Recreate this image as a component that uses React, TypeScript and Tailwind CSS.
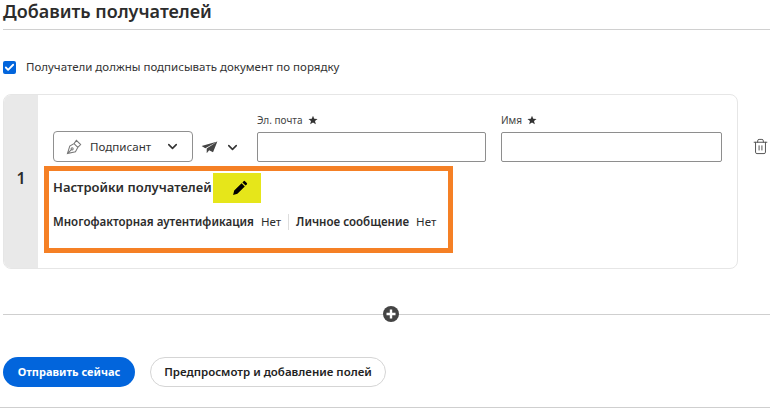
import { Check, ChevronDown, Trash2 } from "lucide-react";

const font = "font-['Noto_Sans','Liberation_Sans',sans-serif]";

function Star() {
  return (
    <svg viewBox="0 0 12 12" className="w-[10px] h-[10px] ml-[5px] text-[#333]" fill="currentColor">
      <path d="M6 .8l1.5 3.7 4 .3-3.1 2.5 1 3.9L6 9.1l-3.4 2.1 1-3.9L.5 4.8l4-.3z" />
    </svg>
  );
}

function Field({ label, width }: { label: string; width: string }) {
  return (
    <div className={`flex flex-col ${width}`}>
      <div className="flex items-center h-[14px] mb-[5px] text-[10px] text-[#444]">
        {label}
        <Star />
      </div>
      <div className="h-[30px] border border-[#8e8e8e] rounded-[2px] bg-white" />
    </div>
  );
}

export default function App() {
  return (
    <div className={`relative w-[777px] h-[415px] overflow-hidden bg-white ${font}`}>
      {/* Header */}
      <div className="ml-[3px] mr-[7px] h-[30px] pt-[1px] border-b border-[#d0d0d0]">
        <h1 className="text-[18px] leading-[20px] font-semibold text-[#2c2c2c]">Добавить получателей</h1>
      </div>

      {/* Order checkbox */}
      <div className="flex items-center ml-[3px] mt-[30px] h-[14px]">
        <div className="w-[13px] h-[13px] rounded-[2px] bg-[#0265dc] flex items-center justify-center">
          <Check className="w-[11px] h-[11px] text-white" strokeWidth={4} />
        </div>
        <span className="ml-[10px] text-[11.5px] text-[#333]">Получатели должны подписывать документ по порядку</span>
      </div>

      {/* Recipient card */}
      <div className="flex ml-[3px] mt-[20px]">
        <div className="relative flex w-[735px] h-[175px] rounded-[8px] border border-[#e6e6e6] overflow-hidden">
          <div className="w-[34px] bg-[#e9e9e9] flex items-center justify-center pb-[8px] text-[16px] font-semibold text-[#2c2c2c]">
            1
          </div>
          <div className="flex-1 pl-[15px] pt-[18px]">
            <div className="flex items-end">
              <button className="flex items-center w-[140px] h-[31px] pl-[12px] border border-[#909090] rounded-[4px] text-[11.6px] text-[#333]">
                <svg viewBox="0 0 18 18" className="w-[17px] h-[17px] text-[#777]" fill="none" stroke="currentColor" strokeWidth="1.1">
                  <path d="M1.5 16.500L4 8.500l4.500-2.500 4 4-2.500 4.500zM1.500 16.500l4.200-4.200M8.500 6L11 2.500l4.500 4.500-3 3" />
                  <circle cx="6.500" cy="11.500" r="1.100" />
                </svg>
                <span className="ml-[7px]">Подписант</span>
                <ChevronDown className="w-[15px] h-[15px] ml-[14px] text-[#333]" strokeWidth={2.5} />
              </button>
              <div className="flex items-center w-[64px] h-[30px] pl-[8px]">
                <svg viewBox="0 0 18 14" className="w-[17px] h-[13px] text-[#444]" fill="currentColor">
                  <path d="M17.500.5L.5 5.500l4 2.200zM17.500.5L6 8.200v5l2.600-3.200 4.200 2z" />
                </svg>
                <ChevronDown className="w-[15px] h-[15px] ml-[7px] text-[#333]" strokeWidth={2.5} />
              </div>
              <Field label="Эл. почта" width="w-[229px]" />
              <div className="w-[15px]" />
              <Field label="Имя" width="w-[221px]" />
            </div>

            <div className="flex items-center h-[30px] mt-[11px]">
              <span className="text-[13px] font-semibold text-[#2c2c2c]">Настройки получателей</span>
              <div className="w-[48px] h-[30px] ml-[1px] pl-[6px] bg-[#e6e61a] flex items-center justify-center">
                <svg viewBox="0 0 16 16" className="w-[16px] h-[16px] text-black" fill="currentColor">
                  <path d="M11.600 1.200a1 1 0 0 1 1.400 0l1.800 1.800a1 1 0 0 1 0 1.400L13.600 5.600l-3.200-3.200zM9.600 3.200l3.200 3.200-7.400 7.400-4.300 1.100 1.100-4.300z" />
                </svg>
              </div>
            </div>

            <div className="flex items-center h-[16px] mt-[11px] text-[11.55px] text-[#2c2c2c]">
              <span className="font-semibold">Многофакторная аутентификация</span>
              <span className="ml-[7px]">Нет</span>
              <span className="w-px h-[16px] bg-[#ddd] mx-[7px]" />
              <span className="font-semibold">Личное сообщение</span>
              <span className="ml-[7px]">Нет</span>
            </div>
          </div>

          {/* Annotation frame */}
          <div className="absolute left-[40px] top-[71px] w-[409px] h-[87px] border-[5px] border-[#f58025] pointer-events-none" />
        </div>
        <Trash2 className="w-[17px] h-[17px] ml-[14px] mt-[44px] text-[#555]" strokeWidth={1.4} />
      </div>

      {/* Add recipient divider */}
      <div className="relative ml-[3px] mr-[7px] mt-[45px] h-px bg-[#cfcfcf]">
        <div className="absolute left-[380px] top-[-8px] w-[16px] h-[16px] rounded-full bg-[#444] flex items-center justify-center text-white">
          <svg viewBox="0 0 10 10" className="w-[10px] h-[10px]" fill="none" stroke="currentColor" strokeWidth="2.4">
            <path d="M5 .5v9M.5 5h9" />
          </svg>
        </div>
      </div>

      {/* Actions */}
      <div className="flex ml-[3px] mt-[42px]">
        <button className="w-[132px] h-[30px] rounded-full bg-[#0265dc] text-white text-[11px] font-bold">
          Отправить сейчас
        </button>
        <button className="w-[236px] h-[30px] ml-[15px] rounded-full border border-[#d5d5d5] text-[#222] text-[11.5px] font-semibold">
          Предпросмотр и добавление полей
        </button>
      </div>

      <div className="mt-[20px] mr-[7px] h-px bg-[#cfcfcf]" />
    </div>
  );
}
